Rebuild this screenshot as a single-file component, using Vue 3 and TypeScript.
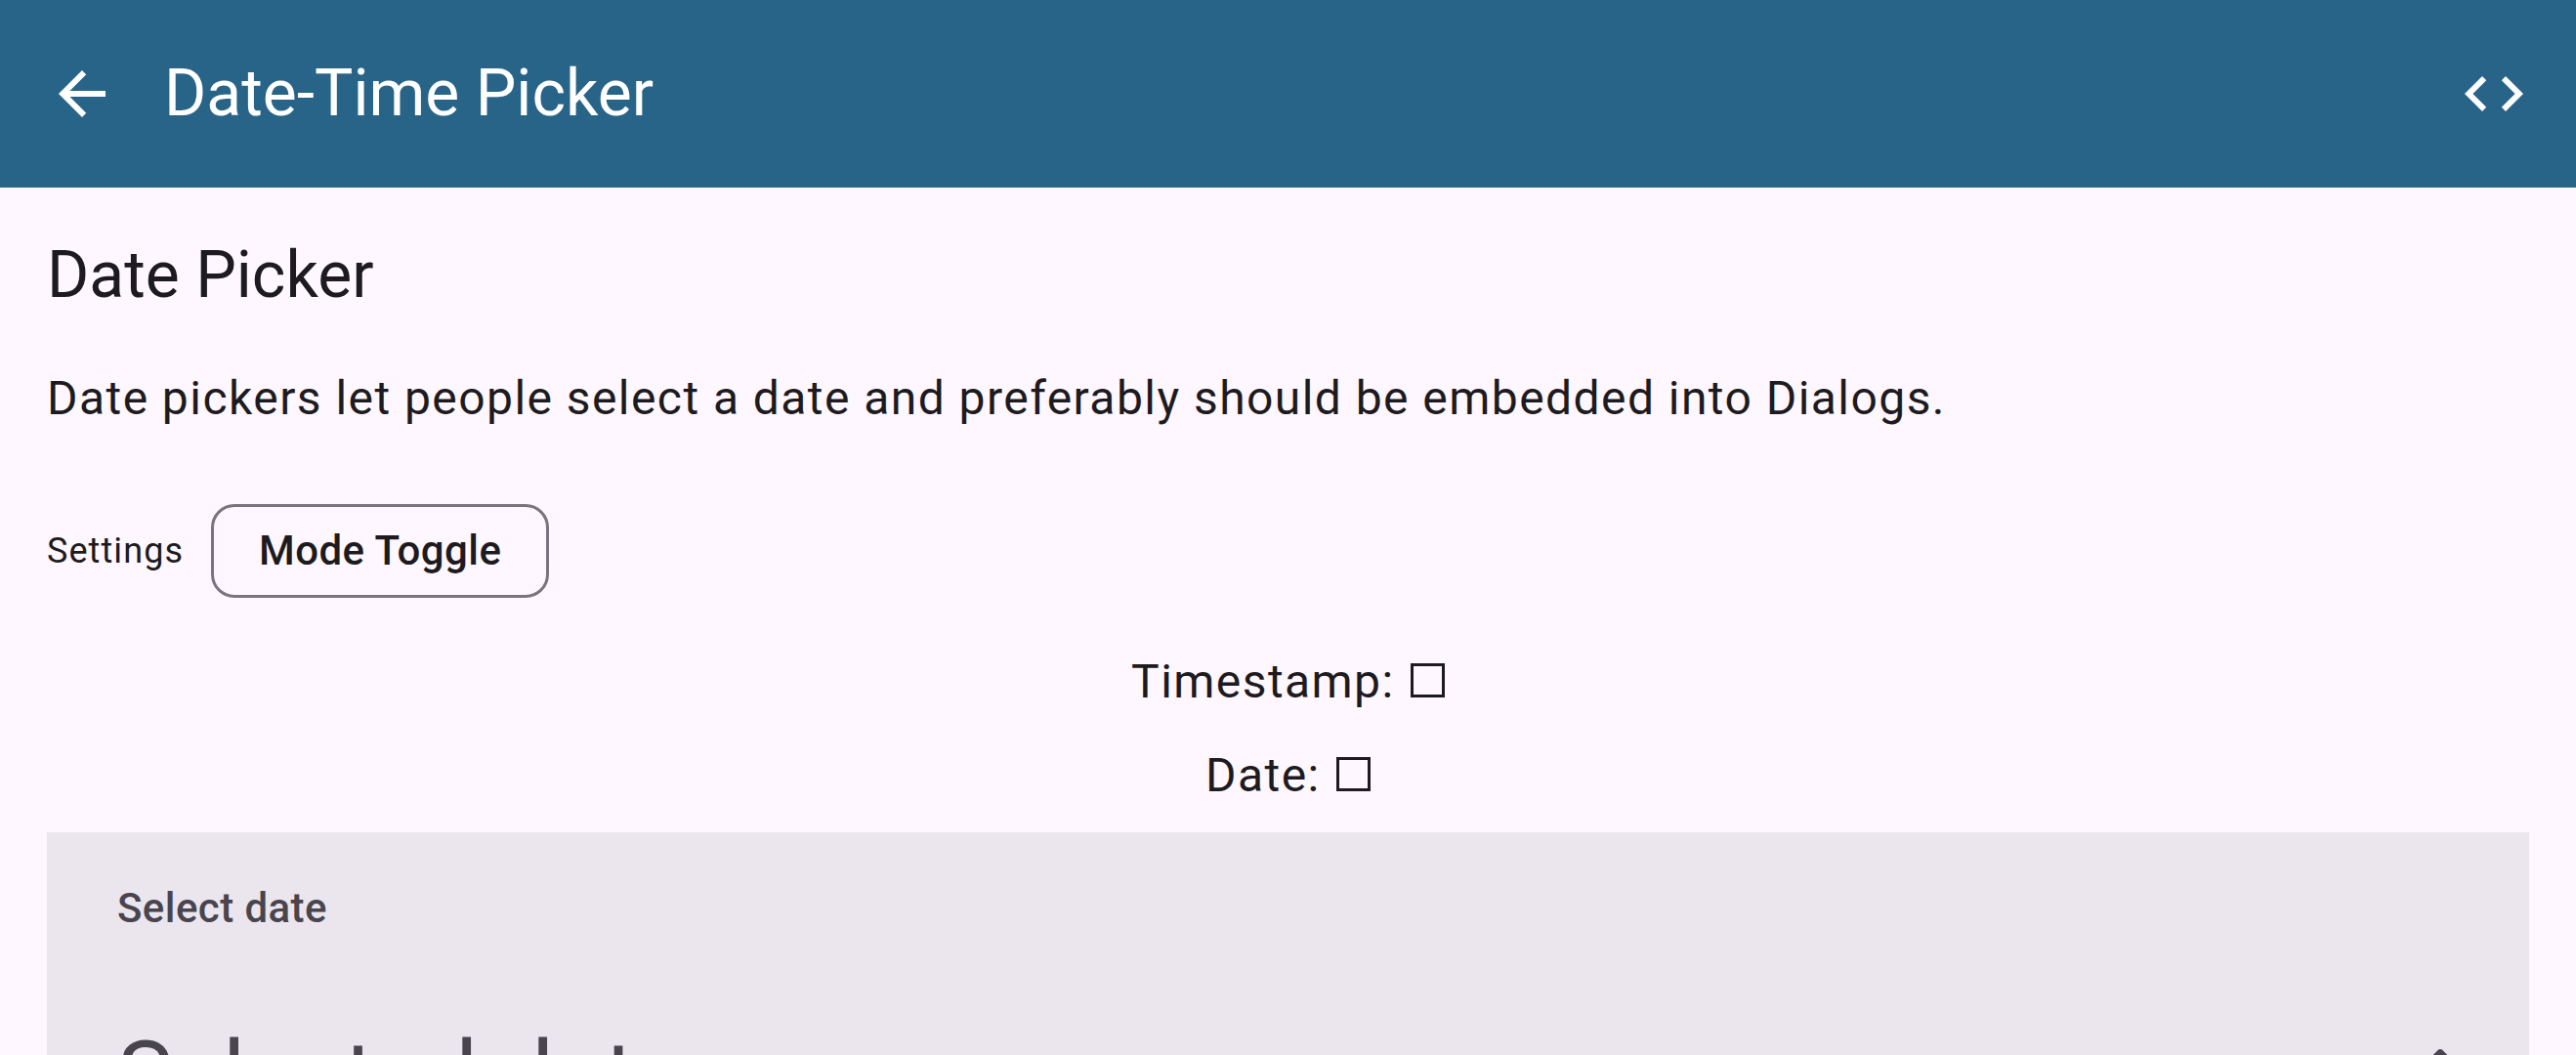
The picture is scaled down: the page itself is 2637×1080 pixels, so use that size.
<script setup lang="ts">
import { ref } from 'vue'

const pickers = ref([
  { id: 'timestamp', label: 'Timestamp:', checked: false },
  { id: 'date', label: 'Date:', checked: false },
])
</script>

<template>
  <div class="screen">
    <header class="bar">
      <button class="icon-button" type="button" aria-label="Back">
        <svg viewBox="0 0 24 24"><path d="M20 11H7.83l5.59-5.59L12 4l-8 8 8 8 1.41-1.41L7.83 13H20z" /></svg>
      </button>
      <h1 class="title">Date-Time Picker</h1>
      <button class="icon-button" type="button" aria-label="View source">
        <svg viewBox="0 0 24 24"><path d="M9.4 16.6 4.8 12l4.6-4.6L8 6l-6 6 6 6zm5.2 0 4.6-4.6-4.6-4.6L16 6l6 6-6 6z" /></svg>
      </button>
    </header>

    <main class="content">
      <h2 class="title">Date Picker</h2>
      <p class="body description">
        Date pickers let people select a date and preferably should be embedded into Dialogs.
      </p>

      <div class="settings">
        <span class="settings-label">Settings</span>
        <button class="chip" type="button">Mode Toggle</button>
      </div>

      <div class="values">
        <label v-for="item in pickers" :key="item.id" class="body value" :for="item.id">
          {{ item.label }}
          <input :id="item.id" v-model="item.checked" type="checkbox" class="box" />
        </label>
      </div>

      <section class="card">
        <p class="card-label">Select date</p>
        <div class="card-row">
          <p class="headline">Selected date</p>
          <button class="icon-button" type="button" aria-label="Edit date">
            <svg viewBox="0 0 24 24"><path d="M14.06 9l.94.94L5.92 19H5v-.92L14.06 9m3.6-6c-.25 0-.51.1-.7.29l-1.83 1.83 3.75 3.75 1.83-1.83c.39-.39.39-1.04 0-1.41l-2.34-2.34c-.2-.2-.45-.29-.71-.29m-3.6 3.19L3 17.25V21h3.75L17.81 9.94l-3.75-3.75z" /></svg>
          </button>
        </div>
      </section>
    </main>
  </div>
</template>

<style>
body {
  margin: 0;
  background: #fef7ff;
}
</style>

<style scoped>
.screen {
  display: flex;
  flex-direction: column;
  height: 100vh;
  overflow: hidden;
  background: #fef7ff;
  color: #1d1b20;
  font-family: Roboto, "Liberation Sans", sans-serif;
}

h1,
h2,
p {
  margin: 0;
}

button {
  font-family: inherit;
  background: none;
  cursor: pointer;
}

.bar {
  display: flex;
  flex: none;
  align-items: center;
  gap: 48px;
  padding: 0 48px;
  height: 192px;
  background: #286488;
  color: #fff;
}

.bar .title {
  flex: 1;
}

.title {
  font-size: 66px;
  line-height: 84px;
  font-weight: 400;
}

.icon-button {
  flex: none;
  width: 72px;
  height: 72px;
  padding: 0;
  border: 0;
  color: inherit;
}

.icon-button svg {
  display: block;
  width: 100%;
  height: 100%;
  fill: currentColor;
}

.content {
  flex: 1;
  min-height: 0;
  padding: 48px 48px 0;
  overflow: hidden;
}

.body {
  font-size: 48px;
  line-height: 72px;
  letter-spacing: 0.03em;
}

.description {
  margin-top: 48px;
}

.settings {
  display: flex;
  align-items: center;
  gap: 28px;
  margin-top: 72px;
}

.settings-label {
  font-size: 36px;
  line-height: 48px;
  letter-spacing: 0.03em;
}

.chip {
  padding: 0 46px;
  height: 96px;
  border: 3px solid #79747e;
  border-radius: 24px;
  color: #1d1b20;
  font-size: 42px;
  line-height: 60px;
  font-weight: 500;
  letter-spacing: 0.01em;
}

.values {
  display: flex;
  flex-direction: column;
  align-items: center;
  gap: 24px;
  margin: 50px 0 22px;
}

.box {
  appearance: none;
  box-sizing: border-box;
  width: 35px;
  height: 35px;
  margin: 0 0 0 3px;
  border: 3px solid #1d1b20;
  vertical-align: baseline;
}

.card {
  padding: 48px 72px 36px;
  background: #ebe6ed;
  color: #49454f;
}

.card-label {
  font-size: 42px;
  line-height: 60px;
  font-weight: 500;
  letter-spacing: 0.01em;
}

.card-row {
  display: flex;
  align-items: center;
  justify-content: space-between;
  margin-top: 81px;
}

.headline {
  font-size: 96px;
  line-height: 120px;
}
</style>
